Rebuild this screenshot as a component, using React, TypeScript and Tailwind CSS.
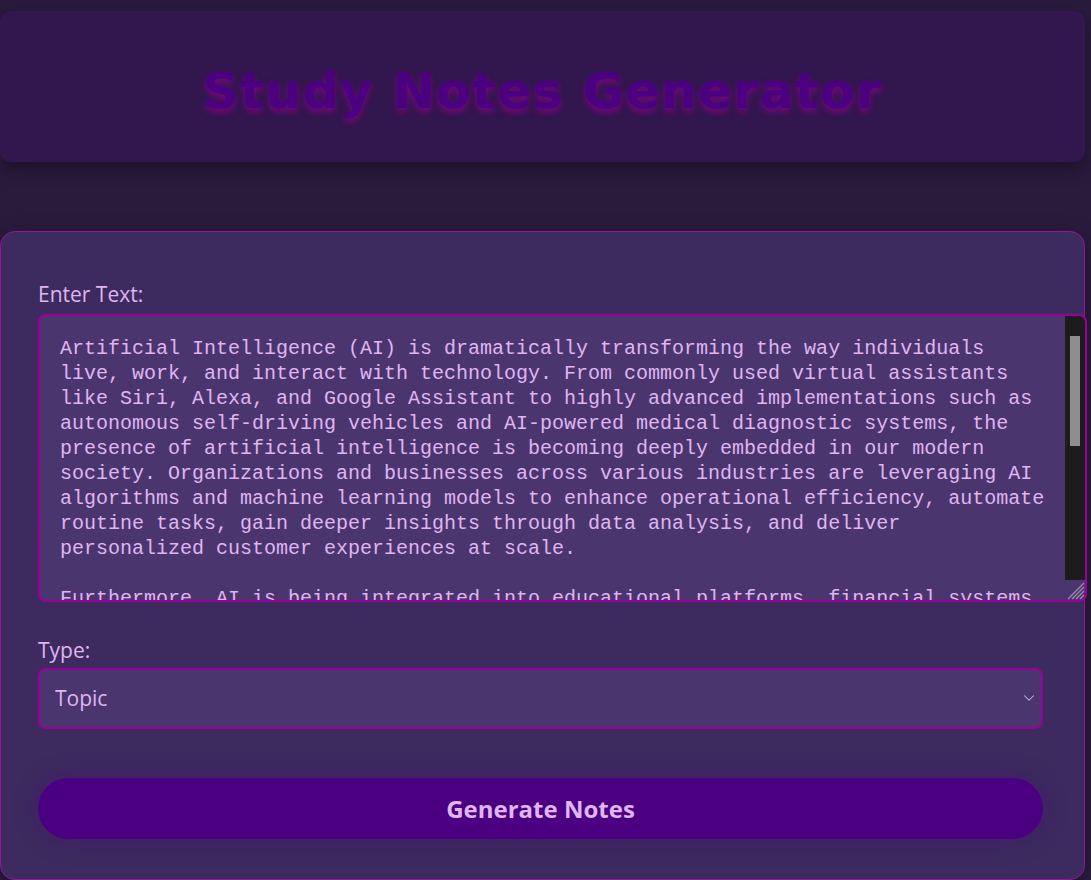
import { ChevronDown } from "lucide-react";

const NOTES_TEXT = `Artificial Intelligence (AI) is dramatically transforming the way individuals live, work, and interact with technology. From commonly used virtual assistants like Siri, Alexa, and Google Assistant to highly advanced implementations such as autonomous self-driving vehicles and AI-powered medical diagnostic systems, the presence of artificial intelligence is becoming deeply embedded in our modern society. Organizations and businesses across various industries are leveraging AI algorithms and machine learning models to enhance operational efficiency, automate routine tasks, gain deeper insights through data analysis, and deliver personalized customer experiences at scale.

Furthermore, AI is being integrated into educational platforms, financial systems, healthcare networks, and public infrastructure. Adaptive learning tools personalize lessons for each student, fraud detection models protect banking transactions in real time, and predictive analytics help hospitals anticipate patient needs before they become critical. Governments are exploring AI to optimize traffic flow, manage energy consumption, and improve the delivery of public services.

However, the rapid growth of AI also raises important ethical and social questions. Concerns about data privacy, algorithmic bias, job displacement, and accountability continue to shape public debate and regulatory policy around the world.`;

// fake scrollbar, the headless browser hides the real one
function ScrollColumn() {
  return (
    <div className="flex w-[20px] shrink-0 flex-col">
      <div className="flex-1 bg-[#1c1c1c] px-[5px] pt-[20px]">
        <div className="h-[110px] bg-[#8e8e8e]" />
      </div>
      <svg width="20" height="20" viewBox="0 0 20 20" className="shrink-0">
        <path d="M19 7 L7 19 M19 11 L11 19 M19 15 L15 19 M19 3 L3 19" stroke="#9a8cab" strokeWidth="1.2" />
      </svg>
    </div>
  );
}

export default function App() {
  return (
    <div className="min-h-[880px] bg-[#2a1b3c] pt-[11px] font-['Open_Sans',sans-serif]">
      <header className="mr-[6px] flex h-[151px] items-center justify-center rounded-[10px] bg-[#32164e] pt-[8px] shadow-[0_6px_16px_rgba(20,8,30,0.6)]">
        <h1 className="font-['DejaVu_Sans',sans-serif] text-[50px] font-bold leading-none tracking-[1.5px] text-[#4b0082] [text-shadow:0_4px_6px_rgba(139,0,139,0.75)]">
          Study Notes Generator
        </h1>
      </header>

      <main className="mr-[6px] mt-[69px] rounded-[15px] border border-[#94169f] bg-[#3d2a5e] pb-[40px] pl-[37px] pr-[41px] pt-[48px] shadow-[0_4px_20px_rgba(0,0,0,0.3)]">
        <label className="block text-[21px] leading-[28px] text-[#dfb6f0]">Enter Text:</label>
        <div className="mt-[6px] mr-[-44px] flex h-[288px] overflow-hidden rounded-[8px] border-2 border-[#9c009c] bg-[#4b356f]">
          <textarea
            spellCheck={false}
            defaultValue={NOTES_TEXT}
            className="block h-full min-w-0 flex-1 resize-none overflow-hidden bg-transparent py-[20px] pl-[20px] pr-[16px] font-['Liberation_Mono',monospace] text-[20px] leading-[25px] text-[#dfb6f0] outline-none"
          />
          <ScrollColumn />
        </div>

        <label className="mt-[34px] block text-[21px] leading-[28px] text-[#dfb6f0]">Type:</label>
        <div className="relative mt-[4px]">
          <select className="block h-[61px] w-full appearance-none rounded-[8px] border-2 border-[#9c009c] bg-[#4b356f] px-[15px] text-[21px] text-[#dfb6f0] outline-none">
            <option>Topic</option>
            <option>Summary</option>
            <option>Key Points</option>
          </select>
          <ChevronDown className="pointer-events-none absolute right-[5px] top-[21px] text-[#d6b0e8]" size={18} strokeWidth={1.4} />
        </div>

        <button className="mt-[49px] block h-[61px] w-full rounded-full bg-[#4b0082] text-[24px] font-bold text-[#dfb6f0] shadow-[0_0_24px_rgba(75,0,130,0.35)]">
          Generate Notes
        </button>
      </main>
    </div>
  );
}
